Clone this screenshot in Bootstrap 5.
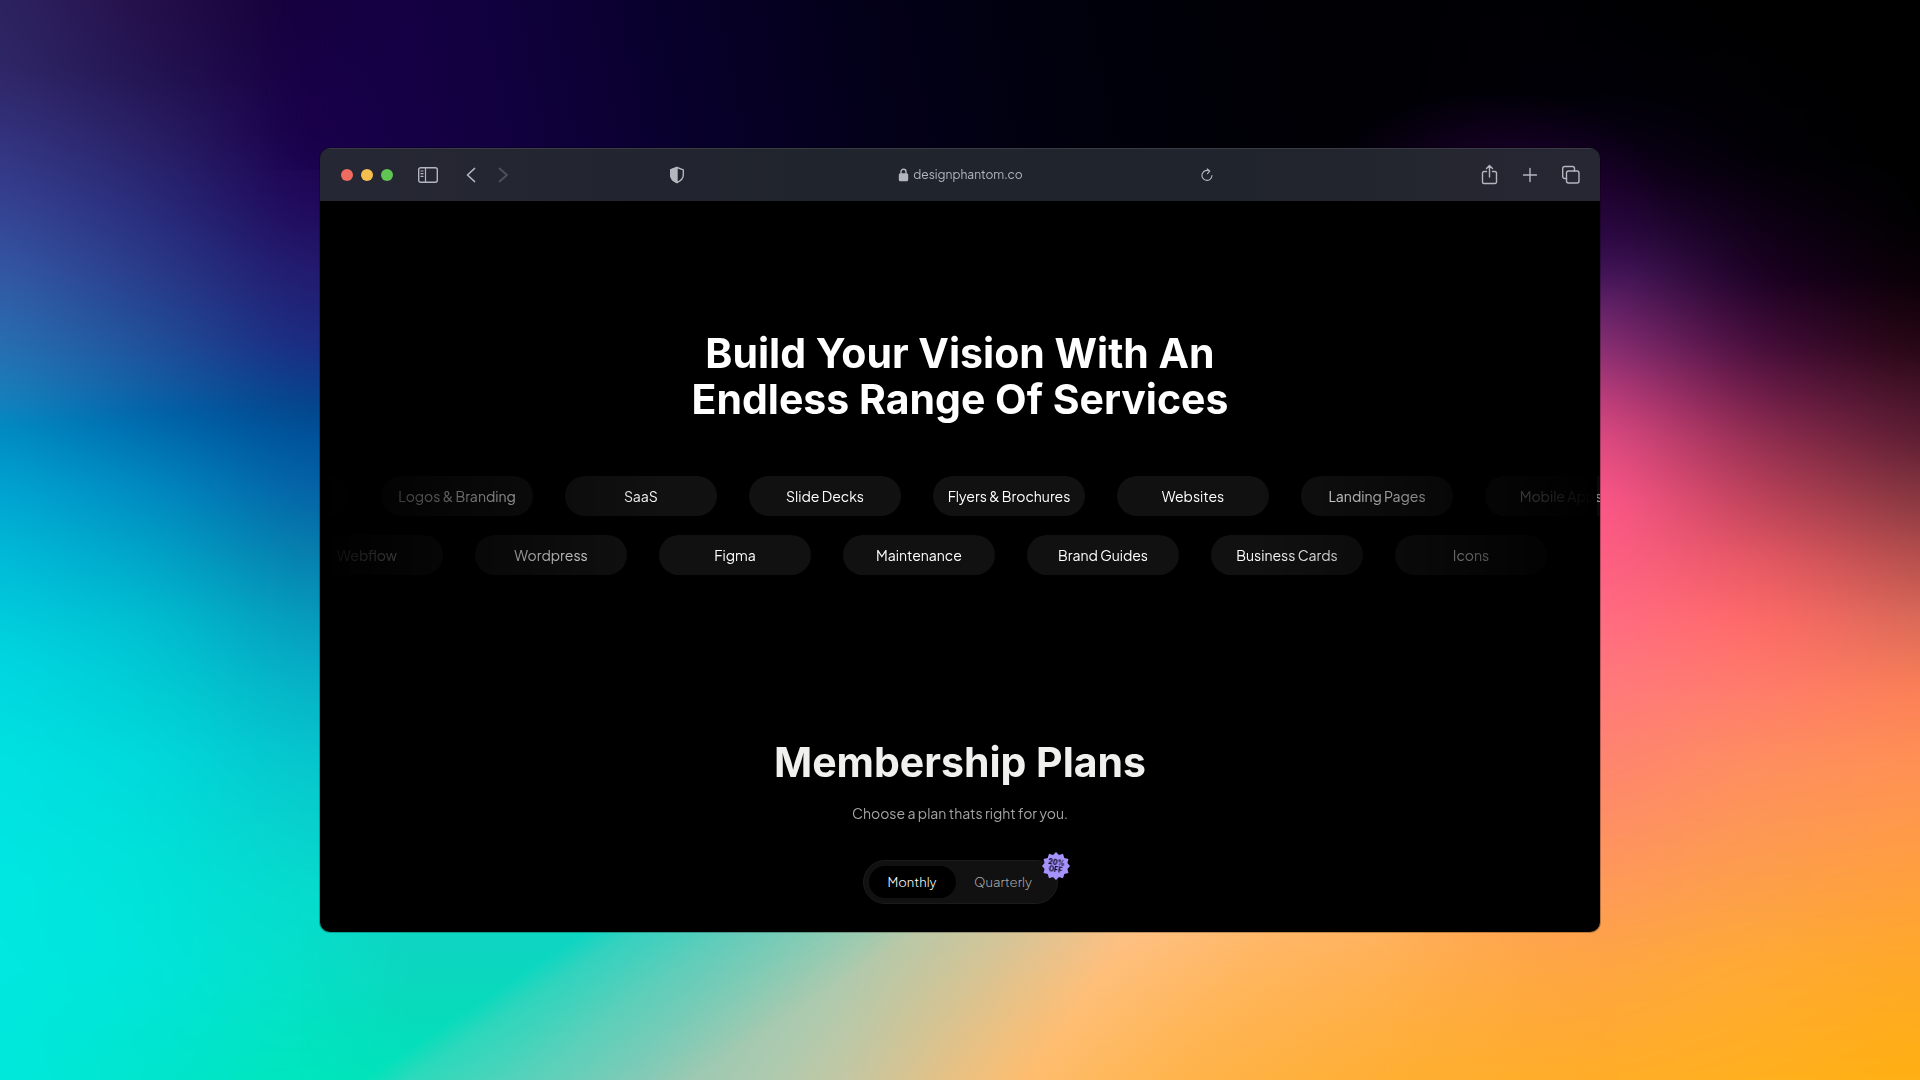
<!DOCTYPE html>
<html lang="en">
<head>
<meta charset="utf-8">
<meta name="viewport" content="width=device-width, initial-scale=1">
<title>Design Phantom</title>
<link href="https://cdn.jsdelivr.net/npm/bootstrap@5.3.0/dist/css/bootstrap.min.css" rel="stylesheet">
<style>
  body { background: #000; font-family: "Plus Jakarta Sans", "Inter", sans-serif; color: #fff; }
  .wallpaper { position: fixed; inset: 0; width: 100%; height: 100%; z-index: -1; }
  .stage { min-height: 100vh; }
  .browser { width: 66.6667%; border-radius: 10px; background: #000; box-shadow: 0 0 0 1px rgba(0,0,0,.25); }
  .titlebar { height: 53px; padding: 0 20px 1px 21px; border-top: 1px solid #3a3c45;
    background: linear-gradient(90deg, #262734 0%, #20242d 38%, #20242c 72%, #272733 100%); }
  .titlebar svg { display: block; fill: none; stroke: #b4b6be; stroke-width: 1.4; stroke-linecap: round; stroke-linejoin: round; }
  .tool { border: 0; background: none; padding: 0; line-height: 1; }
  .tool:disabled { opacity: .3; }
  .shield { margin-right: 22px; }
  .dot { width: 12px; height: 12px; border-radius: 50%; border: 0; padding: 0; }
  .dot-close { background: #ed6b5f; } .dot-min { background: #f5bf4f; } .dot-max { background: #61c554; }
  .side { flex: 1 1 0; }
  .address { width: 41%; display: grid; grid-template-columns: 1fr auto 1fr; align-items: center; }
  .address a { grid-column: 2; color: #b4b6be; font-size: 12px; line-height: 20px; }
  .display-title { font-family: "Inter", sans-serif; font-weight: 700; font-size: 41px; line-height: 46px; margin: 0; }
  .services { padding-top: 129px; }
  .marquee { margin-top: 54px; gap: 19px;
    -webkit-mask-image: linear-gradient(90deg, transparent 0, #000 27%, #000 73%, transparent calc(100% - 3px), rgba(0,0,0,.6) calc(100% - 3px));
    mask-image: linear-gradient(90deg, transparent 0, #000 27%, #000 73%, transparent calc(100% - 3px), rgba(0,0,0,.6) calc(100% - 3px)); }
  .track { gap: 32px; margin-bottom: 0; }
  .track-a { margin-left: -123px; } .track-b { margin-left: -29px; }
  .pill { flex: 0 0 152px; height: 40px; line-height: 40px; border-radius: 20px; background: #111; font-size: 14px; text-align: center; white-space: nowrap; }
  .plans { padding: 164px 0 28px; }
  .plans .display-title { color: #f0f0ee; }
  .subtitle { color: #a5a5a5; font-size: 14px; line-height: 20px; margin: 18px 0 37px; }
  .switcher { background: #111; border: 1px solid #1b1b1b; border-radius: 22px; padding: 5px 10px 5px 5px; }
  .switcher .btn { width: 87px; height: 32px; padding: 0; border: 0; border-radius: 16px; font-size: 13px; font-weight: 300; line-height: 32px; color: #a8a8a8; }
  .switcher .btn-check:checked + .btn { background: #000; color: #fff; }
  .offer { position: absolute; top: -9px; right: -13px; width: 28px; height: 28px; }
  .offer text { font: 800 7px "Inter", sans-serif; fill: #0b0820; text-anchor: middle; }
</style>
</head>
<body>
<svg class="wallpaper" viewBox="0 0 1920 1080" preserveAspectRatio="none" aria-hidden="true">
  <defs>
    <filter id="soften" filterUnits="userSpaceOnUse" x="-120" y="-120" width="2160" height="1320" color-interpolation-filters="sRGB"><feGaussianBlur stdDeviation="32 8"/></filter>
    <linearGradient id="v0" x1="0" y1="0" x2="0" y2="1080" gradientUnits="userSpaceOnUse">
      <stop offset="0" stop-color="#2e2462"/><stop offset=".064" stop-color="#302868"/><stop offset=".128" stop-color="#343480"/><stop offset=".191" stop-color="#364494"/><stop offset=".255" stop-color="#345aa6"/><stop offset=".319" stop-color="#2870b2"/><stop offset=".37" stop-color="#1782bd"/><stop offset=".395" stop-color="#008cc4"/><stop offset=".446" stop-color="#00a2d0"/><stop offset=".51" stop-color="#00bad8"/><stop offset=".606" stop-color="#00d6e0"/><stop offset=".7" stop-color="#00e2e2"/><stop offset=".84" stop-color="#00e8e2"/><stop offset="1" stop-color="#00e9dc"/>
    </linearGradient>
    <linearGradient id="v1" x1="0" y1="0" x2="0" y2="1080" gradientUnits="userSpaceOnUse">
      <stop offset="0" stop-color="#240e48"/><stop offset=".064" stop-color="#22124f"/><stop offset=".128" stop-color="#281e62"/><stop offset=".191" stop-color="#282a78"/><stop offset=".255" stop-color="#283a88"/><stop offset=".319" stop-color="#204e98"/><stop offset=".357" stop-color="#125ba2"/><stop offset=".383" stop-color="#0062a8"/><stop offset=".446" stop-color="#0084be"/><stop offset=".51" stop-color="#00a0c6"/><stop offset=".574" stop-color="#00bccf"/><stop offset=".638" stop-color="#00ccd4"/><stop offset=".7" stop-color="#00d8da"/><stop offset=".797" stop-color="#00e1d8"/><stop offset=".893" stop-color="#00e4da"/><stop offset="1" stop-color="#00e5cc"/>
    </linearGradient>
    <linearGradient id="v2" x1="0" y1="0" x2="0" y2="1080" gradientUnits="userSpaceOnUse">
      <stop offset="0" stop-color="#15003a"/><stop offset=".128" stop-color="#1b004b"/><stop offset=".191" stop-color="#20085a"/><stop offset=".255" stop-color="#221a6e"/><stop offset=".319" stop-color="#1b2a80"/><stop offset=".383" stop-color="#02488e"/><stop offset=".408" stop-color="#00529a"/><stop offset=".446" stop-color="#045fa4"/><stop offset=".51" stop-color="#067cac"/><stop offset=".574" stop-color="#069abc"/><stop offset=".638" stop-color="#06b2c6"/><stop offset=".7" stop-color="#06c4cc"/><stop offset=".765" stop-color="#08d0cc"/><stop offset=".829" stop-color="#06dbcc"/><stop offset=".893" stop-color="#06dfc8"/><stop offset="1" stop-color="#00e6bc"/>
    </linearGradient>
    <linearGradient id="v3" x1="0" y1="0" x2="0" y2="1080" gradientUnits="userSpaceOnUse">
      <stop offset="0" stop-color="#000004"/><stop offset=".089" stop-color="#020008"/><stop offset=".128" stop-color="#080014"/><stop offset=".166" stop-color="#160024"/><stop offset=".213" stop-color="#2c0a44"/><stop offset=".255" stop-color="#4c1a62"/><stop offset=".319" stop-color="#8a3076"/><stop offset=".37" stop-color="#c2407f"/><stop offset=".407" stop-color="#e24c84"/><stop offset=".463" stop-color="#ff588a"/><stop offset=".519" stop-color="#ff6085"/><stop offset=".574" stop-color="#ff6c84"/><stop offset=".639" stop-color="#ff7a7c"/><stop offset=".704" stop-color="#fe8470"/><stop offset=".769" stop-color="#fe9064"/><stop offset=".833" stop-color="#fe9c56"/><stop offset=".893" stop-color="#fea544"/><stop offset="1" stop-color="#ffae28"/>
    </linearGradient>
    <linearGradient id="v4" x1="0" y1="0" x2="0" y2="1080" gradientUnits="userSpaceOnUse">
      <stop offset="0" stop-color="#000"/><stop offset=".15" stop-color="#020006"/><stop offset=".255" stop-color="#1a0022"/><stop offset=".319" stop-color="#430c3a"/><stop offset=".37" stop-color="#701e48"/><stop offset=".407" stop-color="#922e50"/><stop offset=".463" stop-color="#bc4258"/><stop offset=".519" stop-color="#e65862"/><stop offset=".574" stop-color="#ff6a66"/><stop offset=".639" stop-color="#ff7c6a"/><stop offset=".704" stop-color="#fe8e60"/><stop offset=".769" stop-color="#fd9854"/><stop offset=".833" stop-color="#fda146"/><stop offset=".893" stop-color="#ffaa34"/><stop offset="1" stop-color="#ffb01e"/>
    </linearGradient>
    <linearGradient id="v5" x1="0" y1="0" x2="0" y2="1080" gradientUnits="userSpaceOnUse">
      <stop offset="0" stop-color="#000"/><stop offset=".2" stop-color="#000"/><stop offset=".255" stop-color="#080004"/><stop offset=".319" stop-color="#240610"/><stop offset=".37" stop-color="#461428"/><stop offset=".407" stop-color="#5c1e32"/><stop offset=".463" stop-color="#863840"/><stop offset=".519" stop-color="#b4504c"/><stop offset=".574" stop-color="#d86a58"/><stop offset=".639" stop-color="#fb8056"/><stop offset=".704" stop-color="#ff9054"/><stop offset=".769" stop-color="#ff9a48"/><stop offset=".833" stop-color="#ffa238"/><stop offset=".893" stop-color="#ffa828"/><stop offset="1" stop-color="#ffb010"/>
    </linearGradient>
    <linearGradient id="f1" x1="0" x2="160" y1="0" y2="0" gradientUnits="userSpaceOnUse"><stop offset="0" stop-color="#fff" stop-opacity="0"/><stop offset="1" stop-color="#fff"/></linearGradient>
    <linearGradient id="f2" x1="160" x2="300" y1="0" y2="0" gradientUnits="userSpaceOnUse"><stop offset="0" stop-color="#fff" stop-opacity="0"/><stop offset="1" stop-color="#fff"/></linearGradient>
    <linearGradient id="f4" x1="1600" x2="1760" y1="0" y2="0" gradientUnits="userSpaceOnUse"><stop offset="0" stop-color="#fff" stop-opacity="0"/><stop offset="1" stop-color="#fff"/></linearGradient>
    <linearGradient id="f5" x1="1760" x2="1920" y1="0" y2="0" gradientUnits="userSpaceOnUse"><stop offset="0" stop-color="#fff" stop-opacity="0"/><stop offset="1" stop-color="#fff"/></linearGradient>
    <mask id="m1" maskUnits="userSpaceOnUse" x="-120" y="-120" width="2160" height="1320"><rect x="-120" y="-120" width="2160" height="1320" fill="url(#f1)"/></mask>
    <mask id="m2" maskUnits="userSpaceOnUse" x="-120" y="-120" width="2160" height="1320"><rect x="-120" y="-120" width="2160" height="1320" fill="url(#f2)"/></mask>
    <mask id="m4" maskUnits="userSpaceOnUse" x="-120" y="-120" width="2160" height="1320"><rect x="-120" y="-120" width="2160" height="1320" fill="url(#f4)"/></mask>
    <mask id="m5" maskUnits="userSpaceOnUse" x="-120" y="-120" width="2160" height="1320"><rect x="-120" y="-120" width="2160" height="1320" fill="url(#f5)"/></mask>

    <!-- night sky over the window, and its violet glow from below on the right -->
    <linearGradient id="sky" x1="300" y1="100" x2="1600" y2="-160" gradientUnits="userSpaceOnUse">
      <stop offset="0" stop-color="#18004a"/><stop offset=".14" stop-color="#120040"/><stop offset=".28" stop-color="#08002c"/><stop offset=".4" stop-color="#04001c"/><stop offset=".55" stop-color="#01000e"/><stop offset=".7" stop-color="#000006"/><stop offset="1" stop-color="#000004"/>
    </linearGradient>
    <linearGradient id="skyFade" x1="260" y1="0" x2="1600" y2="0" gradientUnits="userSpaceOnUse"><stop offset="0" stop-color="#fff" stop-opacity="0"/><stop offset=".1" stop-color="#fff"/><stop offset=".85" stop-color="#fff"/><stop offset="1" stop-color="#fff" stop-opacity="0"/></linearGradient>
    <mask id="skyMask" maskUnits="userSpaceOnUse" x="260" y="0" width="1340" height="540"><rect x="260" width="1340" height="540" fill="url(#skyFade)"/></mask>
    <radialGradient id="glow" cx="1490" cy="210" r="120" gradientUnits="userSpaceOnUse" gradientTransform="translate(-745 0) scale(1.5 1)"><stop offset="0" stop-color="#2a0040" stop-opacity=".8"/><stop offset="1" stop-color="#2a0040" stop-opacity="0"/></radialGradient>

    <!-- lower band: peach ridge, then the teal sheet with its slanted edge -->
    <linearGradient id="ridge" x1="600" y1="930" x2="1434" y2="1508" gradientUnits="userSpaceOnUse">
      <stop offset="0" stop-color="#7acbbc"/><stop offset=".11" stop-color="#90c8b6"/><stop offset=".22" stop-color="#aecaae"/><stop offset=".33" stop-color="#d4c59a"/><stop offset=".43" stop-color="#fec184"/><stop offset=".55" stop-color="#ffb768"/><stop offset=".7" stop-color="#ffaf58"/><stop offset=".85" stop-color="#ffa84a"/><stop offset="1" stop-color="#ffa440"/>
    </linearGradient>
    <linearGradient id="warm" x1="0" y1="930" x2="0" y2="1080" gradientUnits="userSpaceOnUse"><stop offset="0" stop-color="#ffae20" stop-opacity="0"/><stop offset="1" stop-color="#ffb020" stop-opacity=".65"/></linearGradient>
    <linearGradient id="warmFade" x1="850" y1="0" x2="1400" y2="0" gradientUnits="userSpaceOnUse"><stop offset="0" stop-color="#fff" stop-opacity="0"/><stop offset="1" stop-color="#fff"/></linearGradient>
    <mask id="warmMask" maskUnits="userSpaceOnUse" x="300" y="920" width="1320" height="160"><rect x="300" y="920" width="1320" height="160" fill="url(#warmFade)"/></mask>
    <linearGradient id="sheet" x1="0" y1="930" x2="0" y2="1080" gradientUnits="userSpaceOnUse"><stop offset="0" stop-color="#0fd4c3"/><stop offset=".5" stop-color="#08dabc"/><stop offset="1" stop-color="#00e2ba"/></linearGradient>
    <linearGradient id="sheetFade" x1="588" y1="930" x2="688" y2="1082" gradientUnits="userSpaceOnUse"><stop offset="0" stop-color="#fff"/><stop offset=".14" stop-color="#fff" stop-opacity=".66"/><stop offset=".45" stop-color="#fff" stop-opacity=".34"/><stop offset="1" stop-color="#fff" stop-opacity="0"/></linearGradient>
    <mask id="sheetMask" maskUnits="userSpaceOnUse" x="300" y="920" width="1320" height="160"><rect x="300" y="920" width="1320" height="160" fill="url(#sheetFade)"/></mask>
    <linearGradient id="sideFade" x1="300" y1="0" x2="1620" y2="0" gradientUnits="userSpaceOnUse"><stop offset="0" stop-color="#fff" stop-opacity="0"/><stop offset=".08" stop-color="#fff"/><stop offset=".82" stop-color="#fff"/><stop offset="1" stop-color="#fff" stop-opacity="0"/></linearGradient>
    <mask id="sideMask" maskUnits="userSpaceOnUse" x="300" y="920" width="1320" height="160"><rect x="300" y="920" width="1320" height="160" fill="url(#sideFade)"/></mask>
  </defs>
  <g filter="url(#soften)">
    <rect x="-120" y="-120" width="1080" height="1320" fill="url(#v0)"/>
    <rect x="-120" y="-120" width="1080" height="1320" fill="url(#v1)" mask="url(#m1)"/>
    <rect x="-120" y="-120" width="1080" height="1320" fill="url(#v2)" mask="url(#m2)"/>
    <rect x="960" y="-120" width="1080" height="1320" fill="url(#v3)"/>
    <rect x="960" y="-120" width="1080" height="1320" fill="url(#v4)" mask="url(#m4)"/>
    <rect x="960" y="-120" width="1080" height="1320" fill="url(#v5)" mask="url(#m5)"/>
  </g>
  <rect x="260" width="1340" height="170" fill="url(#sky)" mask="url(#skyMask)"/>
  <rect x="1200" width="500" height="340" fill="url(#glow)"/>
  <g mask="url(#sideMask)">
    <rect x="300" y="920" width="1320" height="160" fill="url(#ridge)"/>
    <rect x="300" y="920" width="1320" height="160" fill="url(#warm)" mask="url(#warmMask)"/>
    <rect x="300" y="920" width="1320" height="160" fill="url(#sheet)" mask="url(#sheetMask)"/>
  </g>
</svg>

<div class="stage d-flex align-items-center justify-content-center">
  <div class="browser overflow-hidden">
    <header class="titlebar d-flex align-items-center">
      <div class="side d-flex align-items-center">
        <div class="d-flex gap-2">
          <button class="dot dot-close" aria-label="Close"></button>
          <button class="dot dot-min" aria-label="Minimise"></button>
          <button class="dot dot-max" aria-label="Zoom"></button>
        </div>
        <button class="tool ms-4" aria-label="Sidebar"><svg width="22" height="18" viewBox="0 0 22 18"><rect x="1.7" y="1.7" width="18.6" height="14.6" rx="2"/><path d="M8.500 2v14M4 5h2M4 7.700h2M4 10.400h2" stroke-width="1.2"/></svg></button>
        <button class="tool ms-4" aria-label="Back"><svg width="16" height="18" viewBox="0 0 16 18"><path d="M11.500 2.500 4.500 9l7 6.500" stroke-width="1.7"/></svg></button>
        <button class="tool ms-3" aria-label="Forward" disabled><svg width="16" height="18" viewBox="0 0 16 18"><path d="M4.500 2.500 12 9l-7.500 6.500" stroke-width="1.7"/></svg></button>
        <button class="tool shield ms-auto" aria-label="Privacy report"><svg width="16" height="18" viewBox="0 0 16 18"><path d="M8 1.500 14.300 3.800V9c0 3.600-2.600 5.900-6.300 7.500C4.300 14.900 1.700 12.600 1.700 9V3.800Z"/><path d="M8 1.500V16.500C4.300 14.900 1.700 12.600 1.700 9V3.800Z" fill="#b4b6be"/></svg></button>
      </div>
      <div class="address">
        <a class="d-flex align-items-center text-decoration-none" href="#services">
          <svg class="me-1" width="11" height="14" viewBox="0 0 11 14"><rect x="1.500" y="6" width="8" height="6.500" rx=".8" fill="#b4b6be"/><path d="M3 6V3.800a2.500 2.500 0 0 1 5 0V6"/></svg>designphantom.co
        </a>
        <button class="tool ms-auto" aria-label="Reload"><svg width="14" height="14" viewBox="0 0 14 14"><path d="M8.600 3.100A5 5 0 1 0 11 7.600M6.300.8 8.800 3.200 6.500 5.600" stroke-width="1.1"/></svg></button>
      </div>
      <div class="side d-flex align-items-center justify-content-end gap-4">
        <button class="tool" aria-label="Share"><svg width="17" height="22" viewBox="0 0 17 22"><path d="M5.500 7.500H3A1.500 1.500 0 0 0 1.500 9v9A1.500 1.500 0 0 0 3 19.500h11a1.500 1.500 0 0 0 1.500-1.500V9A1.500 1.500 0 0 0 14 7.500h-2.500M8.500 13V1.800M5.500 4.500l3-2.900 3 2.900"/></svg></button>
        <button class="tool" aria-label="New tab"><svg width="16" height="18" viewBox="0 0 16 18"><path d="M8 2.500v13M1.500 9h13"/></svg></button>
        <button class="tool" aria-label="Tab overview"><svg width="18" height="20" viewBox="1 0 18 20"><rect x="5.500" y="6" width="12.500" height="12" rx="2"/><path d="M5.500 13.500H3.700a2 2 0 0 1-2-2V3.500a2 2 0 0 1 2-2H11.500a2 2 0 0 1 2 2V6"/></svg></button>
      </div>
    </header>

    <main>
      <section class="services" id="services">
        <h1 class="display-title text-center">Build Your Vision With An<br>Endless Range Of Services</h1>
        <div class="marquee d-flex flex-column overflow-hidden">
          <ul class="track track-a list-unstyled d-flex">
            <li class="pill"></li>
            <li class="pill">Logos &amp; Branding</li>
            <li class="pill">SaaS</li>
            <li class="pill">Slide Decks</li>
            <li class="pill">Flyers &amp; Brochures</li>
            <li class="pill">Websites</li>
            <li class="pill">Landing Pages</li>
            <li class="pill">Mobile Apps</li>
          </ul>
          <ul class="track track-b list-unstyled d-flex">
            <li class="pill">Webflow</li>
            <li class="pill">Wordpress</li>
            <li class="pill">Figma</li>
            <li class="pill">Maintenance</li>
            <li class="pill">Brand Guides</li>
            <li class="pill">Business Cards</li>
            <li class="pill">Icons</li>
          </ul>
        </div>
      </section>

      <section class="plans d-flex flex-column align-items-center">
        <h2 class="display-title">Membership Plans</h2>
        <p class="subtitle">Choose a plan thats right for you.</p>
        <div class="switcher position-relative d-flex gap-1" role="group" aria-label="Billing period">
          <input class="btn-check" type="radio" name="billing" id="monthly" checked>
          <label class="btn" for="monthly">Monthly</label>
          <input class="btn-check" type="radio" name="billing" id="quarterly">
          <label class="btn" for="quarterly">Quarterly</label>
          <svg class="offer" viewBox="0 0 28 28" role="img" aria-label="20% off">
            <path fill="#a592fa" d="M14 0l3 3.100 4-1.300 1.300 4.100 4.200 1-1.100 4.100L28 14l-2.600 3 1.100 4.100-4.200 1-1.300 4.100-4-1.300L14 28l-3-3.100-4 1.300-1.300-4.100-4.200-1 1.100-4.100L0 14l2.600-3-1.100-4.100 4.200-1L7 1.800l4 1.300Z"/>
            <g transform="rotate(8 14 14)"><text x="14" y="13">20%</text><text x="14" y="20">OFF</text></g>
          </svg>
        </div>
      </section>
    </main>
  </div>
</div>
<script src="https://cdn.jsdelivr.net/npm/bootstrap@5.3.0/dist/js/bootstrap.bundle.min.js"></script>
</body>
</html>
